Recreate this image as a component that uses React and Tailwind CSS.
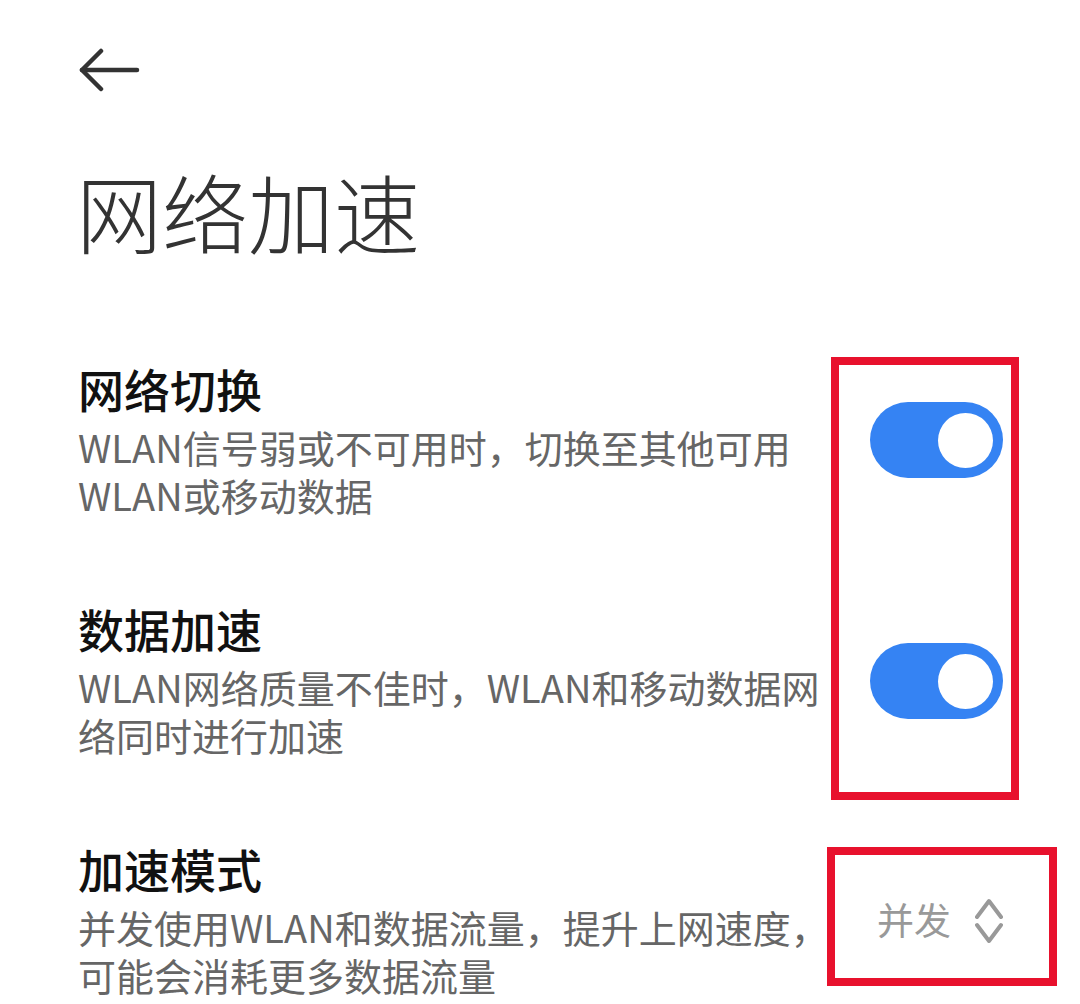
import React, { useState } from 'react';

const font = { fontFamily: '"Noto Sans CJK SC", "Noto Sans", sans-serif' };

function Toggle({ on, onChange }) {
    return (
        <button
            onClick={() => onChange(!on)}
            className={`w-[133px] h-[76px] rounded-full flex items-center shrink-0 px-[10px] ${on ? 'bg-[#3583f3] justify-end' : 'bg-[#d9d9d9] justify-start'}`}
        >
            <span className="w-[55px] h-[55px] rounded-full bg-white block" />
        </button>
    );
}

function Row({ title, desc, children, controlTop }) {
    return (
        <div className="flex items-start justify-between">
            <div className="w-[765px]">
                <div className="text-[46px] leading-[46px] font-medium text-[#111111]">{title}</div>
                <div className="mt-[12px] text-[38px] leading-[48px] text-[#666666]">{desc}</div>
            </div>
            <div className={controlTop}>{children}</div>
        </div>
    );
}

export default function App() {
    const [switchOn, setSwitchOn] = useState(true);
    const [boostOn, setBoostOn] = useState(true);

    return (
        <div className="relative w-[1080px] h-[1004px] bg-white overflow-hidden" style={font}>
            {/* Back */}
            <div className="pt-[48px] pl-[78px]">
                <svg width="62" height="44" viewBox="0 0 62 44" fill="none" stroke="#333333" strokeWidth="4.5" strokeLinecap="round" strokeLinejoin="round">
                    <path d="M4 22 H59" />
                    <path d="M23 3 L4 22 L23 41" />
                </svg>
            </div>

            {/* Title */}
            <div className="mt-[76px] pl-[76px] text-[86px] leading-none font-light text-[#333333]">网络加速</div>

            <div className="mt-[111px] pl-[78px] pr-[77px] flex flex-col gap-[86px]">
                <Row
                    title="网络切换"
                    desc="WLAN信号弱或不可用时，切换至其他可用WLAN或移动数据"
                    controlTop="mt-[37px]"
                >
                    <Toggle on={switchOn} onChange={setSwitchOn} />
                </Row>
                <Row
                    title="数据加速"
                    desc="WLAN网络质量不佳时，WLAN和移动数据网络同时进行加速"
                    controlTop="mt-[38px]"
                >
                    <Toggle on={boostOn} onChange={setBoostOn} />
                </Row>
                <Row
                    title="加速模式"
                    desc="并发使用WLAN和数据流量，提升上网速度，可能会消耗更多数据流量"
                    controlTop="mt-[50px]"
                >
                    <div className="flex items-center gap-[24px]">
                        <span className="text-[37px] leading-[48px] text-[#999999]">并发</span>
                        <svg width="28" height="48" viewBox="0 0 28 48" fill="none" stroke="#999999" strokeWidth="4" strokeLinecap="round" strokeLinejoin="round">
                            <path d="M2 22 L14 6 L26 22" />
                            <path d="M2 30 L14 46 L26 30" />
                        </svg>
                    </div>
                </Row>
            </div>

            {/* Annotation boxes */}
            <div className="absolute left-[831px] top-[357px] w-[188px] h-[443px] border-[8px] border-[#e8112d]" />
            <div className="absolute left-[827px] top-[847px] w-[230px] h-[139px] border-[8px] border-[#e8112d]" />
        </div>
    );
}
